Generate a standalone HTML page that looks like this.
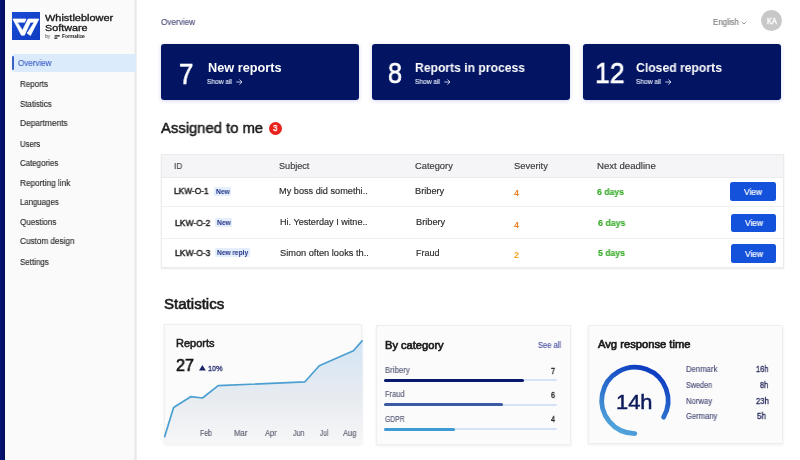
<!DOCTYPE html>
<html><head><meta charset="utf-8"><style>
html,body{margin:0;padding:0;}
body{width:800px;height:460px;position:relative;overflow:hidden;background:#ffffff;font-family:"Liberation Sans", sans-serif;}
.t{position:absolute;line-height:1;white-space:nowrap;transform-origin:0 0;will-change:transform;}
.r{position:absolute;}
</style></head><body>
<div class="r" style="left:0px;top:0px;width:136px;height:460px;background:#fafafa;"></div>
<div class="r" style="left:134px;top:0px;width:3px;height:460px;background:linear-gradient(90deg,#f4f4f4,#e8e8e8 50%,#f2f2f2);"></div>
<div class="r" style="left:0px;top:0px;width:5px;height:460px;background:linear-gradient(90deg,#071274,#040f6a 70%,#020b52);"></div>
<svg class="r" style="left:12px;top:12px" width="28" height="28" viewBox="0 0 28 28">
<defs><linearGradient id="lg" x1="0" y1="0" x2="1" y2="1"><stop offset="0" stop-color="#1a4bd4"/><stop offset="1" stop-color="#0f3cc2"/></linearGradient></defs>
<rect width="28" height="28" fill="url(#lg)"/>
<path d="M0.9 7.0 L14.0 7.0 L12.6 10.2 L5.2 10.2 L10.5 18.4 L16.1 7.0 L26.9 7.0 L18.4 23.6 L15.0 21.0 L16.2 19.8 L22.3 10.2 L18.4 10.2 L12.4 23.2 L9.4 23.2 Z" fill="#fff" stroke="#fff" stroke-width="0.7" stroke-linejoin="round"/>
</svg>
<div class="t" style="left:44.50px;top:13.00px;font-size:9.45px;color:#1c1c1c;-webkit-text-stroke:0.35px #1c1c1c;transform:scaleX(1.161);">Whistleblower</div>
<div class="t" style="left:44.50px;top:23.00px;font-size:9.45px;color:#1c1c1c;-webkit-text-stroke:0.35px #1c1c1c;transform:scaleX(1.140);">Software</div>
<div class="t" style="left:45.00px;top:34.00px;font-size:5.60px;color:#777;-webkit-text-stroke:0.15px #777;transform:scaleX(0.862);">by</div>
<svg class="r" style="left:54px;top:34.5px" width="6" height="4" viewBox="0 0 6 4"><path d="M0.6 0.2 H5.8 V1.5 H0.6 Z M0.3 2.4 H3.4 V3.8 H0.3 Z" fill="#1a1a1a"/></svg>
<div class="t" style="left:62.10px;top:34.00px;font-size:5.81px;color:#222;font-weight:700;transform:scaleX(0.841);">Formalize</div>
<div class="r" style="left:12px;top:53.5px;width:124px;height:18.2px;background:#dcebfb;border-radius:2px 0 0 2px;"></div>
<div class="r" style="left:11.5px;top:55.6px;width:2px;height:14px;background:#3a60c4;border-radius:1px;"></div>
<div class="t" style="left:18.10px;top:59.00px;font-size:8.58px;color:#4065c8;-webkit-text-stroke:0.15px #4065c8;transform:scaleX(0.936);">Overview</div>
<div class="t" style="left:19.80px;top:80.00px;font-size:8.58px;color:#2b2b2b;-webkit-text-stroke:0.15px #2b2b2b;transform:scaleX(0.932);">Reports</div>
<div class="t" style="left:19.80px;top:100.00px;font-size:8.58px;color:#2b2b2b;-webkit-text-stroke:0.15px #2b2b2b;transform:scaleX(0.923);">Statistics</div>
<div class="t" style="left:19.80px;top:119.00px;font-size:8.58px;color:#2b2b2b;-webkit-text-stroke:0.15px #2b2b2b;transform:scaleX(0.969);">Departments</div>
<div class="t" style="left:19.80px;top:140.00px;font-size:8.58px;color:#2b2b2b;-webkit-text-stroke:0.15px #2b2b2b;transform:scaleX(0.902);">Users</div>
<div class="t" style="left:19.80px;top:159.00px;font-size:8.58px;color:#2b2b2b;-webkit-text-stroke:0.15px #2b2b2b;transform:scaleX(0.921);">Categories</div>
<div class="t" style="left:19.80px;top:179.00px;font-size:8.58px;color:#2b2b2b;-webkit-text-stroke:0.15px #2b2b2b;transform:scaleX(0.957);">Reporting link</div>
<div class="t" style="left:19.60px;top:198.00px;font-size:8.58px;color:#2b2b2b;-webkit-text-stroke:0.15px #2b2b2b;transform:scaleX(0.911);">Languages</div>
<div class="t" style="left:19.60px;top:218.00px;font-size:8.58px;color:#2b2b2b;-webkit-text-stroke:0.15px #2b2b2b;transform:scaleX(0.942);">Questions</div>
<div class="t" style="left:19.60px;top:237.00px;font-size:8.58px;color:#2b2b2b;-webkit-text-stroke:0.15px #2b2b2b;transform:scaleX(0.951);">Custom design</div>
<div class="t" style="left:19.60px;top:258.00px;font-size:8.58px;color:#2b2b2b;-webkit-text-stroke:0.15px #2b2b2b;transform:scaleX(0.926);">Settings</div>
<div class="t" style="left:160.90px;top:18.00px;font-size:8.72px;color:#4e4e7c;-webkit-text-stroke:0.15px #4e4e7c;transform:scaleX(0.938);">Overview</div>
<div class="t" style="left:712.70px;top:19.00px;font-size:8.14px;color:#7c7c7c;-webkit-text-stroke:0.15px #7c7c7c;transform:scaleX(0.966);">English</div>
<svg class="r" style="left:740.5px;top:21px" width="6" height="4" viewBox="0 0 6 4"><path d="M0.8 0.8 L3 3 L5.2 0.8" stroke="#8a8a8a" stroke-width="0.9" fill="none"/></svg>
<div class="r" style="left:761.1px;top:10.3px;width:21.2px;height:21.2px;background:#c8c8c8;border-radius:50%;"></div>
<div class="t" style="left:767.00px;top:17.00px;font-size:9.16px;color:#ffffff;-webkit-text-stroke:0.45px #ffffff;transform:scaleX(0.810);">KA</div>
<div class="r" style="left:161px;top:44px;width:198px;height:56.4px;background:#021462;border-radius:3px;box-shadow:0 1px 4px rgba(30,50,200,0.2);"></div>
<div class="r" style="left:372px;top:44px;width:198px;height:56.4px;background:#021462;border-radius:3px;box-shadow:0 1px 4px rgba(30,50,200,0.2);"></div>
<div class="r" style="left:583px;top:44px;width:198px;height:56.4px;background:#021462;border-radius:3px;box-shadow:0 1px 4px rgba(30,50,200,0.2);"></div>
<div class="t" style="left:179.40px;top:59.00px;font-size:29.94px;color:#fff;-webkit-text-stroke:0.65px #fff;transform:scaleX(0.859);">7</div>
<div class="t" style="left:387.60px;top:59.00px;font-size:29.23px;color:#fff;-webkit-text-stroke:0.65px #fff;transform:scaleX(0.861);">8</div>
<div class="t" style="left:595.00px;top:59.00px;font-size:29.23px;color:#fff;-webkit-text-stroke:0.65px #fff;transform:scaleX(0.911);">12</div>
<div class="t" style="left:207.65px;top:62.00px;font-size:12.65px;color:#ffffff;font-weight:700;transform:scaleX(1.006);">New reports</div>
<div class="t" style="left:207.00px;top:79.00px;font-size:7.12px;color:#e2e6f6;-webkit-text-stroke:0.15px #e2e6f6;transform:scaleX(0.929);">Show all</div>
<svg class="r" style="left:235.5px;top:78.8px" width="7" height="6" viewBox="0 0 7 6"><path d="M0.3 3 H6 M3.4 0.5 L6 3 L3.4 5.5" stroke="#e2e6f6" stroke-width="0.85" fill="none"/></svg>
<div class="t" style="left:415.00px;top:62.00px;font-size:12.65px;color:#ffffff;font-weight:700;transform:scaleX(0.960);">Reports in process</div>
<div class="t" style="left:415.00px;top:79.00px;font-size:7.12px;color:#e2e6f6;-webkit-text-stroke:0.15px #e2e6f6;transform:scaleX(0.929);">Show all</div>
<svg class="r" style="left:443.5px;top:78.8px" width="7" height="6" viewBox="0 0 7 6"><path d="M0.3 3 H6 M3.4 0.5 L6 3 L3.4 5.5" stroke="#e2e6f6" stroke-width="0.85" fill="none"/></svg>
<div class="t" style="left:636.40px;top:62.00px;font-size:12.65px;color:#ffffff;font-weight:700;transform:scaleX(0.963);">Closed reports</div>
<div class="t" style="left:636.40px;top:79.00px;font-size:7.12px;color:#e2e6f6;-webkit-text-stroke:0.15px #e2e6f6;transform:scaleX(0.929);">Show all</div>
<svg class="r" style="left:664.9px;top:78.8px" width="7" height="6" viewBox="0 0 7 6"><path d="M0.3 3 H6 M3.4 0.5 L6 3 L3.4 5.5" stroke="#e2e6f6" stroke-width="0.85" fill="none"/></svg>
<div class="t" style="left:161.10px;top:121.00px;font-size:14.97px;color:#1a1a1a;-webkit-text-stroke:0.50px #1a1a1a;transform:scaleX(0.989);">Assigned to me</div>
<div class="r" style="left:268.8px;top:122px;width:13px;height:13px;background:#e8221b;border-radius:50%;"></div>
<div class="t" style="left:273.20px;top:124.00px;font-size:9.17px;color:#ffffff;-webkit-text-stroke:0.40px #ffffff;transform:scaleX(0.863);">3</div>
<div class="r" style="left:161px;top:154px;width:622.5px;height:114.2px;background:#ffffff;border:1px solid #ebebeb;box-sizing:border-box;box-shadow:0 1px 1.5px rgba(0,0,0,0.09);"></div>
<div class="r" style="left:162px;top:155px;width:620.5px;height:21.5px;background:#f5f5f8;"></div>
<div class="r" style="left:162px;top:176.5px;width:620.5px;height:1px;background:#ebebef;"></div>
<div class="r" style="left:162px;top:206px;width:620.5px;height:1px;background:#efeff2;"></div>
<div class="r" style="left:162px;top:237.5px;width:620.5px;height:1px;background:#efeff2;"></div>
<div class="t" style="left:174.10px;top:162.00px;font-size:8.58px;color:#3b3b3b;-webkit-text-stroke:0.15px #3b3b3b;transform:scaleX(0.944);">ID</div>
<div class="t" style="left:279.00px;top:162.00px;font-size:8.58px;color:#3b3b3b;-webkit-text-stroke:0.15px #3b3b3b;transform:scaleX(1.062);">Subject</div>
<div class="t" style="left:414.70px;top:162.00px;font-size:8.58px;color:#3b3b3b;-webkit-text-stroke:0.15px #3b3b3b;transform:scaleX(1.086);">Category</div>
<div class="t" style="left:513.75px;top:162.00px;font-size:8.58px;color:#3b3b3b;-webkit-text-stroke:0.15px #3b3b3b;transform:scaleX(1.095);">Severity</div>
<div class="t" style="left:596.70px;top:162.00px;font-size:8.58px;color:#3b3b3b;-webkit-text-stroke:0.15px #3b3b3b;transform:scaleX(1.121);">Next deadline</div>
<div class="t" style="left:174.10px;top:187.00px;font-size:8.72px;color:#1f1f1f;-webkit-text-stroke:0.43px #1f1f1f;transform:scaleX(0.956);">LKW-O-1</div>
<div class="r" style="left:214px;top:187.3px;width:16.7px;height:8.3px;background:#e5eefc;border-radius:1.5px;"></div>
<div class="t" style="left:215.60px;top:189.00px;font-size:6.83px;color:#1f3185;font-weight:700;transform:scaleX(0.968);">New</div>
<div class="t" style="left:278.75px;top:187.00px;font-size:8.58px;color:#2b2b2b;-webkit-text-stroke:0.15px #2b2b2b;transform:scaleX(1.070);">My boss did somethi..</div>
<div class="t" style="left:415.00px;top:187.00px;font-size:8.58px;color:#2b2b2b;-webkit-text-stroke:0.15px #2b2b2b;transform:scaleX(1.076);">Bribery</div>
<div class="t" style="left:513.60px;top:189.00px;font-size:8.60px;color:#f0842a;font-weight:700;transform:scaleX(1.046);">4</div>
<div class="t" style="left:597.40px;top:188.00px;font-size:9.01px;color:#30a820;font-weight:700;-webkit-text-stroke:0.10px #30a820;transform:scaleX(0.963);">6 days</div>
<div class="r" style="left:730.4px;top:182.1px;width:45.2px;height:18.8px;background:#1552db;border-radius:2.5px;"></div>
<div class="t" style="left:744.10px;top:188.00px;font-size:8.72px;color:#ffffff;-webkit-text-stroke:0.20px #ffffff;transform:scaleX(0.959);">View</div>
<div class="t" style="left:175.00px;top:219.00px;font-size:8.72px;color:#1f1f1f;-webkit-text-stroke:0.43px #1f1f1f;transform:scaleX(0.978);">LKW-O-2</div>
<div class="r" style="left:215.2px;top:217.6px;width:16.7px;height:9.1px;background:#e5eefc;border-radius:1.5px;"></div>
<div class="t" style="left:216.80px;top:220.00px;font-size:6.83px;color:#1f3185;font-weight:700;transform:scaleX(0.968);">New</div>
<div class="t" style="left:280.00px;top:218.00px;font-size:8.58px;color:#2b2b2b;-webkit-text-stroke:0.15px #2b2b2b;transform:scaleX(1.061);">Hi. Yesterday I witne..</div>
<div class="t" style="left:415.75px;top:218.00px;font-size:8.58px;color:#2b2b2b;-webkit-text-stroke:0.15px #2b2b2b;transform:scaleX(1.076);">Bribery</div>
<div class="t" style="left:514.40px;top:221.00px;font-size:8.60px;color:#f0842a;font-weight:700;transform:scaleX(1.046);">4</div>
<div class="t" style="left:598.00px;top:219.00px;font-size:9.01px;color:#30a820;font-weight:700;-webkit-text-stroke:0.10px #30a820;transform:scaleX(0.977);">6 days</div>
<div class="r" style="left:731.3px;top:213.6px;width:45.2px;height:18.8px;background:#1552db;border-radius:2.5px;"></div>
<div class="t" style="left:745.00px;top:219.00px;font-size:8.72px;color:#ffffff;-webkit-text-stroke:0.20px #ffffff;transform:scaleX(0.959);">View</div>
<div class="t" style="left:175.00px;top:249.00px;font-size:8.72px;color:#1f1f1f;-webkit-text-stroke:0.43px #1f1f1f;transform:scaleX(0.978);">LKW-O-3</div>
<div class="r" style="left:215.2px;top:248px;width:35.2px;height:8.6px;background:#e5eefc;border-radius:1.5px;"></div>
<div class="t" style="left:216.90px;top:250.00px;font-size:6.83px;color:#1f3185;font-weight:700;transform:scaleX(0.964);">New reply</div>
<div class="t" style="left:280.00px;top:249.00px;font-size:8.58px;color:#2b2b2b;-webkit-text-stroke:0.15px #2b2b2b;transform:scaleX(1.076);">Simon often looks th..</div>
<div class="t" style="left:415.75px;top:249.00px;font-size:8.58px;color:#2b2b2b;-webkit-text-stroke:0.15px #2b2b2b;transform:scaleX(1.049);">Fraud</div>
<div class="t" style="left:514.40px;top:251.00px;font-size:8.60px;color:#f5a524;font-weight:700;transform:scaleX(1.046);">2</div>
<div class="t" style="left:598.40px;top:249.00px;font-size:9.01px;color:#30a820;font-weight:700;-webkit-text-stroke:0.10px #30a820;transform:scaleX(0.963);">5 days</div>
<div class="r" style="left:731.3px;top:244.3px;width:45.2px;height:18.8px;background:#1552db;border-radius:2.5px;"></div>
<div class="t" style="left:745.00px;top:250.00px;font-size:8.72px;color:#ffffff;-webkit-text-stroke:0.20px #ffffff;transform:scaleX(0.959);">View</div>
<div class="t" style="left:164.00px;top:297.00px;font-size:14.68px;color:#1a1a1a;-webkit-text-stroke:0.60px #1a1a1a;transform:scaleX(1.027);">Statistics</div>
<div class="r" style="left:163.5px;top:324.2px;width:198.7px;height:119.8px;background:#fbfbfc;border:1px solid #efeff1;box-sizing:border-box;box-shadow:0 1px 3px rgba(0,0,0,0.07);"></div>
<div class="r" style="left:376.2px;top:325.2px;width:195.3px;height:119.8px;background:#fbfbfc;border:1px solid #efeff1;box-sizing:border-box;box-shadow:0 1px 3px rgba(0,0,0,0.07);"></div>
<div class="r" style="left:587.8px;top:324.5px;width:195.2px;height:119.5px;background:#fbfbfc;border:1px solid #efeff1;box-sizing:border-box;box-shadow:0 1px 3px rgba(0,0,0,0.07);"></div>
<svg class="r" style="left:163.5px;top:324.2px" width="199" height="120" viewBox="0 0 199 120">
<defs><linearGradient id="ag" x1="0" y1="0" x2="0" y2="1"><stop offset="0.05" stop-color="#d5e5f5"/><stop offset="0.6" stop-color="#e9ecf0"/><stop offset="1" stop-color="#f6f7f8"/></linearGradient></defs>
<polygon points="0.4,113.4 9.6,83.5 26.7,72.7 38.5,74.0 54.2,61.7 140.9,57.8 155.3,41.8 189.4,26.8 198.6,16.3 198.7,119.8 0.4,119.8" fill="url(#ag)"/>
<polyline points="0.4,113.4 9.6,83.5 26.7,72.7 38.5,74.0 54.2,61.7 140.9,57.8 155.3,41.8 189.4,26.8 198.6,16.3" fill="none" stroke="#4b9fd1" stroke-width="1.7" stroke-linejoin="round"/>
</svg>
<div class="t" style="left:176.00px;top:339.00px;font-size:10.47px;color:#1e1e1e;-webkit-text-stroke:0.55px #1e1e1e;transform:scaleX(1.050);">Reports</div>
<div class="t" style="left:176.00px;top:357.00px;font-size:17.19px;color:#111111;-webkit-text-stroke:0.60px #111111;transform:scaleX(0.942);">27</div>
<svg class="r" style="left:199px;top:365.4px" width="7" height="6" viewBox="0 0 7 6"><path d="M0 5.6 L3.4 0 L6.8 5.6 Z" fill="#1b2468"/></svg>
<div class="t" style="left:207.50px;top:365.00px;font-size:8.02px;color:#1b2468;-webkit-text-stroke:0.30px #1b2468;transform:scaleX(0.904);">10%</div>
<div class="t" style="left:199.70px;top:429.00px;font-size:8.43px;color:#5b5f70;-webkit-text-stroke:0.15px #5b5f70;transform:scaleX(0.819);">Feb</div>
<div class="t" style="left:233.70px;top:429.00px;font-size:8.43px;color:#5b5f70;-webkit-text-stroke:0.15px #5b5f70;transform:scaleX(0.916);">Mar</div>
<div class="t" style="left:265.10px;top:429.00px;font-size:8.43px;color:#5b5f70;-webkit-text-stroke:0.15px #5b5f70;transform:scaleX(0.892);">Apr</div>
<div class="t" style="left:293.20px;top:429.00px;font-size:8.43px;color:#5b5f70;-webkit-text-stroke:0.15px #5b5f70;transform:scaleX(0.824);">Jun</div>
<div class="t" style="left:320.00px;top:429.00px;font-size:8.43px;color:#5b5f70;-webkit-text-stroke:0.15px #5b5f70;transform:scaleX(0.761);">Jul</div>
<div class="t" style="left:343.10px;top:429.00px;font-size:8.43px;color:#5b5f70;-webkit-text-stroke:0.15px #5b5f70;transform:scaleX(0.894);">Aug</div>
<div class="t" style="left:384.60px;top:340.00px;font-size:10.90px;color:#1a1a1a;-webkit-text-stroke:0.65px #1a1a1a;transform:scaleX(1.020);">By category</div>
<div class="t" style="left:537.50px;top:341.00px;font-size:8.36px;color:#4a50a0;-webkit-text-stroke:0.15px #4a50a0;transform:scaleX(0.900);">See all</div>
<div class="t" style="left:384.60px;top:366.00px;font-size:8.72px;color:#595d78;-webkit-text-stroke:0.15px #595d78;transform:scaleX(0.898);">Bribery</div>
<div class="t" style="left:551.00px;top:367.00px;font-size:8.60px;color:#2a2a2a;-webkit-text-stroke:0.40px #2a2a2a;transform:scaleX(0.837);">7</div>
<div class="r" style="left:384px;top:379.2px;width:173px;height:2.2px;background:#d7e3f6;border-radius:1.5px;"></div>
<div class="r" style="left:384px;top:378.8px;width:140.0px;height:3.2px;background:#0a196c;border-radius:1.6px;"></div>
<div class="t" style="left:384.60px;top:390.00px;font-size:8.72px;color:#595d78;-webkit-text-stroke:0.15px #595d78;transform:scaleX(0.856);">Fraud</div>
<div class="t" style="left:551.00px;top:391.00px;font-size:8.60px;color:#2a2a2a;-webkit-text-stroke:0.40px #2a2a2a;transform:scaleX(0.837);">6</div>
<div class="r" style="left:384px;top:403.59999999999997px;width:173px;height:2.2px;background:#d7e3f6;border-radius:1.5px;"></div>
<div class="r" style="left:384px;top:403.2px;width:119.3px;height:3.2px;background:#3c5ba3;border-radius:1.6px;"></div>
<div class="t" style="left:384.60px;top:415.00px;font-size:8.72px;color:#595d78;-webkit-text-stroke:0.15px #595d78;transform:scaleX(0.774);">GDPR</div>
<div class="t" style="left:551.00px;top:415.00px;font-size:8.60px;color:#2a2a2a;-webkit-text-stroke:0.40px #2a2a2a;transform:scaleX(0.837);">4</div>
<div class="r" style="left:384px;top:428.09999999999997px;width:173px;height:2.2px;background:#d7e3f6;border-radius:1.5px;"></div>
<div class="r" style="left:384px;top:427.7px;width:71.0px;height:3.2px;background:#3f9bd3;border-radius:1.6px;"></div>
<div class="t" style="left:597.60px;top:339.00px;font-size:10.61px;color:#1a1a1a;-webkit-text-stroke:0.65px #1a1a1a;transform:scaleX(1.055);">Avg response time</div>
<svg class="r" style="left:594px;top:360px" width="82" height="82" viewBox="0 0 82 82">
<defs><linearGradient id="cg" x1="0.7" y1="0" x2="0.2" y2="1"><stop offset="0" stop-color="#0b3ac0"/><stop offset="0.5" stop-color="#2b6fcc"/><stop offset="1" stop-color="#55aadc"/></linearGradient></defs>
<path d="M 40.8 73.6 A 33.2 33.2 0 1 1 69.55 57.2" fill="none" stroke="url(#cg)" stroke-width="4.8" stroke-linecap="round"/>
</svg>
<div class="t" style="left:615.70px;top:391.00px;font-size:21.06px;color:#0d1b5b;-webkit-text-stroke:0.50px #0d1b5b;transform:scaleX(1.039);">14h</div>
<div class="t" style="left:685.65px;top:366.00px;font-size:8.28px;color:#4a4e78;-webkit-text-stroke:0.15px #4a4e78;transform:scaleX(0.933);">Denmark</div>
<div class="t" style="left:755.60px;top:365.00px;font-size:8.45px;color:#2c3060;-webkit-text-stroke:0.35px #2c3060;transform:scaleX(0.873);">16h</div>
<div class="t" style="left:685.65px;top:382.00px;font-size:8.28px;color:#4a4e78;-webkit-text-stroke:0.15px #4a4e78;transform:scaleX(0.874);">Sweden</div>
<div class="t" style="left:759.80px;top:381.00px;font-size:8.45px;color:#2c3060;-webkit-text-stroke:0.35px #2c3060;transform:scaleX(0.862);">8h</div>
<div class="t" style="left:685.65px;top:398.00px;font-size:8.28px;color:#4a4e78;-webkit-text-stroke:0.15px #4a4e78;transform:scaleX(0.932);">Norway</div>
<div class="t" style="left:755.60px;top:397.00px;font-size:8.45px;color:#2c3060;-webkit-text-stroke:0.35px #2c3060;transform:scaleX(0.901);">23h</div>
<div class="t" style="left:685.65px;top:413.00px;font-size:8.28px;color:#4a4e78;-webkit-text-stroke:0.15px #4a4e78;transform:scaleX(0.921);">Germany</div>
<div class="t" style="left:757.00px;top:412.00px;font-size:8.45px;color:#2c3060;-webkit-text-stroke:0.35px #2c3060;transform:scaleX(0.947);">5h</div>
</body></html>
